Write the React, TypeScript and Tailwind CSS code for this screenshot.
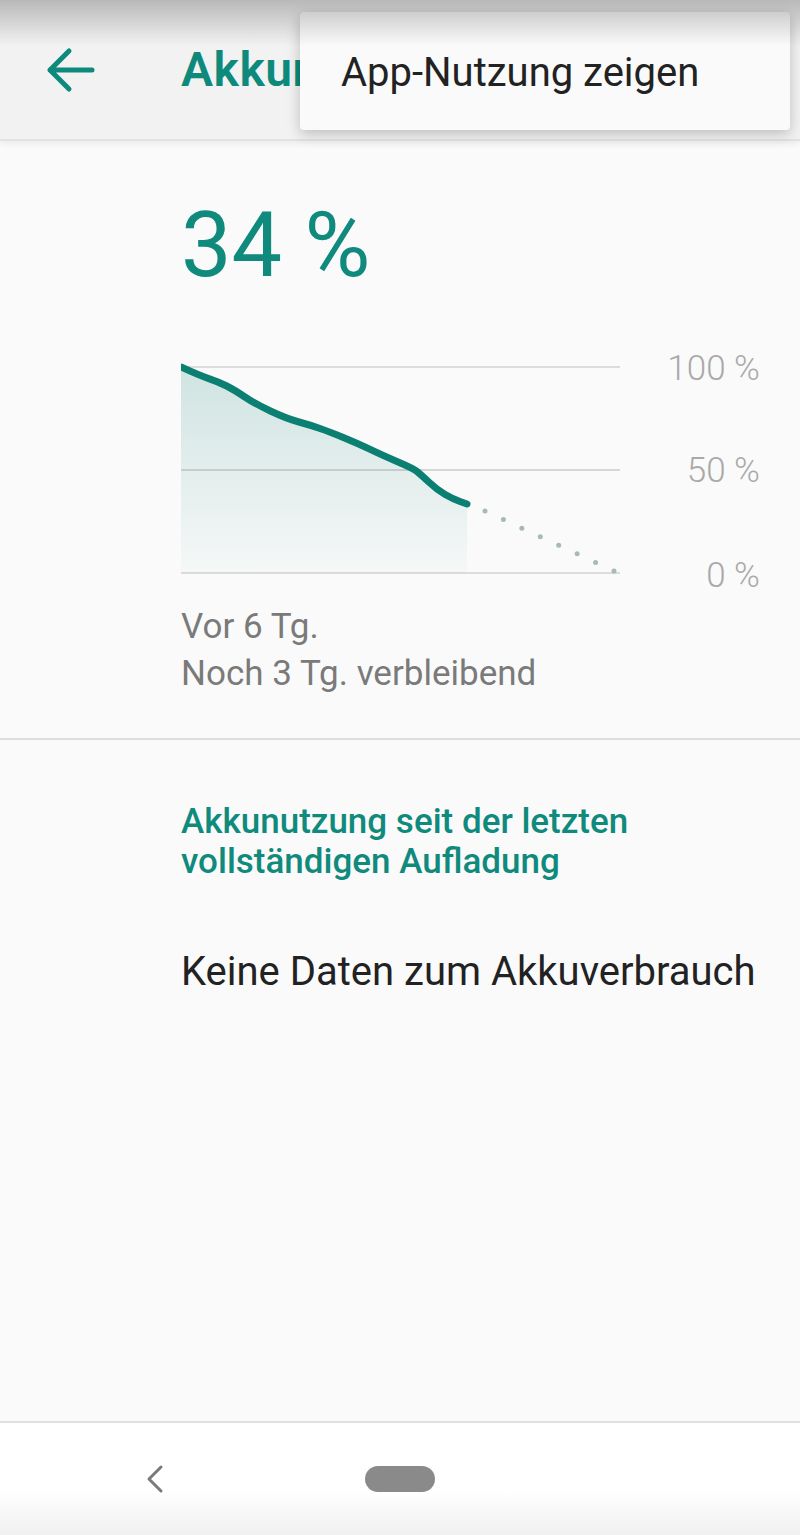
import React from "react";

const pts: [number, number][] = [
  [0, 7],
  [17.9, 15.3],
  [37.7, 22],
  [53.6, 30],
  [73.5, 43.5],
  [105.3, 58.5],
  [129, 65],
  [149, 72],
  [176.8, 83.4],
  [200.6, 95],
  [232.4, 108.4],
  [240.4, 115],
  [256.3, 130],
  [272, 139],
  [286, 144],
];

function smoothPath(p: [number, number][]) {
  let d = `M ${p[0][0]} ${p[0][1]}`;
  for (let i = 1; i < p.length - 1; i++) {
    const mx = (p[i][0] + p[i + 1][0]) / 2;
    const my = (p[i][1] + p[i + 1][1]) / 2;
    d += ` Q ${p[i][0]} ${p[i][1]} ${mx} ${my}`;
  }
  const last = p[p.length - 1];
  d += ` L ${last[0]} ${last[1]}`;
  return d;
}

function Chart() {
  const line = smoothPath(pts);
  const area = `${line} L 286 213 L 0 213 Z`;
  const dots = Array.from({ length: 8 }, (_, i) => {
    const t = i / 7;
    return [304 + (433 - 304) * t, 151 + (211 - 151) * t];
  });
  return (
    <svg width="445" height="220" viewBox="0 0 445 220" className="block mt-[11px]">
      <defs>
        <linearGradient id="fillg" x1="0" y1="0" x2="0" y2="1">
          <stop offset="0" stopColor="#00796b" stopOpacity="0.17" />
          <stop offset="1" stopColor="#00796b" stopOpacity="0.02" />
        </linearGradient>
      </defs>
      <line x1="0" y1="7" x2="439" y2="7" stroke="#dcdcdc" strokeWidth="2" />
      <line x1="0" y1="110" x2="439" y2="110" stroke="#d6d6d6" strokeWidth="2" />
      <line x1="0" y1="213" x2="439" y2="213" stroke="#dcdcdc" strokeWidth="2" />
      <path d={area} fill="url(#fillg)" />
      <path d={line} fill="none" stroke="#0b7f71" strokeWidth="7" strokeLinecap="round" strokeLinejoin="round" />
      {dots.map(([x, y], i) => (
        <circle key={i} cx={x} cy={y} r="2.5" fill="#a7b9b9" />
      ))}
    </svg>
  );
}

export default function App() {
  return (
    <div
      className="relative w-[800px] h-[1535px] flex flex-col bg-[#fafafa] overflow-hidden"
      style={{ fontFamily: "Roboto, 'Noto Sans', sans-serif" }}
    >
      {/* Toolbar */}
      <div className="h-[141px] shrink-0 bg-[#f2f2f2] flex items-center border-b-2 border-[#e2e2e2] shadow-[0_3px_6px_rgba(0,0,0,0.06)]">
        <svg width="60" height="50" viewBox="0 0 60 50" className="ml-[41px]">
          <path d="M9 25 H51 M28 6 L9 25 L28 44" fill="none" stroke="#0d8a7b" strokeWidth="5" strokeLinecap="round" strokeLinejoin="round" />
        </svg>
        <div className="ml-[80px] whitespace-nowrap text-[48px] font-semibold text-[#0d8a7b] leading-none tracking-[0.5px]">
          Akkunutzung
        </div>
      </div>

      {/* Popup menu */}
      <div className="absolute left-[300px] top-[12px] w-[490px] h-[118px] bg-[#fafafa] rounded-[4px] shadow-[0_4px_14px_rgba(0,0,0,0.22)] flex items-center pl-[41px] z-10">
        <span className="text-[40px] text-[#222222] leading-none mt-[3px]">App-Nutzung zeigen</span>
      </div>

      {/* Status bar shade */}
      <div className="absolute left-0 top-0 w-full h-[46px] bg-gradient-to-b from-[rgba(0,0,0,0.24)] to-transparent z-20 pointer-events-none" />

      {/* Content */}
      <div className="flex-1 flex flex-col">
        <div className="pl-[181px] mt-[60px] h-[90px] text-[90px] leading-[90px] text-[#0f8a7c]">34 %</div>

        <div className="flex pl-[181px] pr-[40px] mt-[58px]">
          <Chart />
          <div className="flex-1 flex flex-col items-end text-[35px] text-[#a9a9a9] font-light">
            <div className="h-[40px] leading-[40px]">100 %</div>
            <div className="h-[40px] leading-[40px] mt-[62px]">50 %</div>
            <div className="h-[40px] leading-[40px] mt-[65px]">0 %</div>
          </div>
        </div>

        <div className="pl-[181px] mt-[7px] text-[35px] leading-[47px] text-[#7a7a7a]">
          <div>Vor 6 Tg.</div>
          <div>Noch 3 Tg. verbleibend</div>
        </div>

        <div className="mt-[41px] h-[2px] bg-[#dedede]" />

        <div className="pl-[181px] mt-[62px] text-[35px] leading-[40px] font-medium text-[#0f8a7c]">
          <div>Akkunutzung seit der letzten</div>
          <div>vollständigen Aufladung</div>
        </div>

        <div className="pl-[181px] mt-[66px] text-[40px] leading-[48px] text-[#222222]">
          Keine Daten zum Akkuverbrauch
        </div>
      </div>

      {/* Navigation bar */}
      <div className="h-[114px] shrink-0 border-t-2 border-[#e0e0e0] bg-gradient-to-b from-white from-60% to-[#f0f0f0] relative flex items-center">
        <svg width="20" height="30" viewBox="0 0 20 30" className="ml-[145px]">
          <path d="M16 3 L4 15 L16 27" fill="none" stroke="#7a7a7a" strokeWidth="3" strokeLinecap="round" strokeLinejoin="round" />
        </svg>
        <div className="ml-[200px] w-[70px] h-[26px] rounded-full bg-[#8a8a8a]" />
      </div>
    </div>
  );
}
